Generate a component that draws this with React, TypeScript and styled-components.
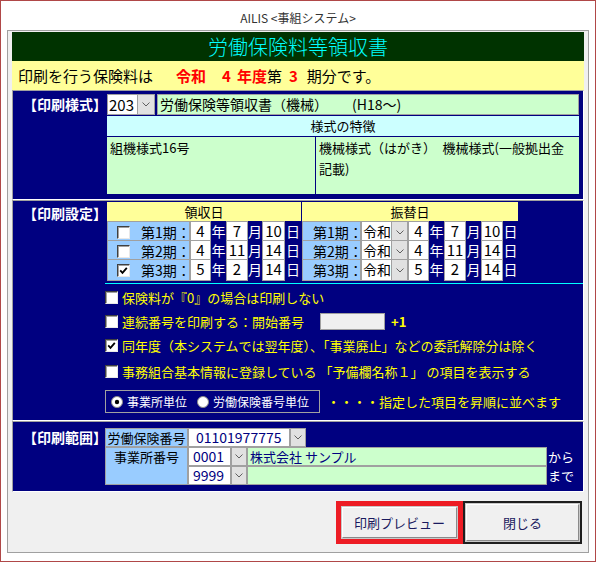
import React from "react";
import styled, { createGlobalStyle } from "styled-components";

const GlobalStyle = createGlobalStyle`
  html, body { margin: 0; padding: 0; background: #fff; }
  body { font-family: "Noto Sans CJK JP", "Noto Sans", sans-serif; }
  *, *::before, *::after { box-sizing: border-box; }
`;

const Window = styled.div`
  width: 596px;
  height: 562px;
  border: 1px solid #b04848;
  background: #fff;
  display: flex;
  flex-direction: column;
`;

const TitleBar = styled.div`
  height: 29px;
  padding-top: 3px;
  display: flex;
  align-items: center;
  justify-content: center;
  font-size: 12px;
  color: #333;
`;

const Frame = styled.div`
  flex: 1;
  margin: 0 6px 8px;
  border: 1px solid #a0a0a0;
  background: #f0f0f0;
  padding: 1px 4px 0;
  display: flex;
  flex-direction: column;
`;

const Header = styled.div`
  height: 29px;
  background: #003300;
  color: #00ffff;
  font-size: 20px;
  font-weight: 300;
  line-height: 29px;
  text-align: center;
`;

const InfoBar = styled.div`
  height: 29px;
  background: #ffff99;
  display: flex;
  align-items: center;
  padding-left: 6px;
  font-size: 15px;
  color: #000;
  white-space: nowrap;
`;

const InfoText = styled.span<{ $ml?: number; $red?: boolean }>`
  margin-left: ${(p) => p.$ml ?? 0}px;
  color: ${(p) => (p.$red ? "#ff0000" : "#000")};
  font-weight: ${(p) => (p.$red ? "bold" : "normal")};
`;

const Section = styled.div<{ $pt: number; $pb: number }>`
  background: #000080;
  border: 1px solid;
  border-color: #a0a0a0 #ffffff #ffffff #a0a0a0;
  display: grid;
  grid-template-columns: 92px 1fr;
  padding: ${(p) => p.$pt}px 4px ${(p) => p.$pb}px 0;
`;

const SectionLabel = styled.div<{ $lh: number; $pt?: number }>`
  color: #fff;
  font-weight: bold;
  font-size: 14px;
  line-height: ${(p) => p.$lh}px;
  padding: ${(p) => p.$pt ?? 0}px 0 0 10px;
  white-space: nowrap;
`;

/* ---- 印刷様式 ---- */
const StyleBody = styled.div`
  display: flex;
  flex-direction: column;
  gap: 1px;
  margin-left: 2px;
`;

const StyleRow = styled.div`
  display: flex;
  gap: 2px;
  height: 21px;
`;

const CodeSelect = styled.div`
  display: flex;
  width: 48px;
`;

const CodeValue = styled.div`
  flex: 1;
  background: #fff;
  border: 1px solid #a0a0a0;
  border-right: none;
  font-size: 15px;
  line-height: 19px;
  padding-left: 1px;
  color: #000;
`;

const DropButton = styled.div<{ $w: number }>`
  width: ${(p) => p.$w}px;
  flex: none;
  background: #e1e1e1;
  border: 1px solid #a0a0a0;
  display: flex;
  align-items: center;
  justify-content: center;
`;

const NameField = styled.div`
  flex: 1;
  background: #ccffcc;
  border: 1px solid #a0a0a0;
  font-size: 14px;
  line-height: 19px;
  padding-left: 2px;
  color: #000;
  white-space: nowrap;
`;

const NameSuffix = styled.span`
  margin-left: 24px;
`;

const FeatureHead = styled.div`
  height: 20px;
  background: #ccffff;
  font-size: 13px;
  line-height: 20px;
  text-align: center;
  color: #000;
`;

const FeatureBody = styled.div`
  height: 57px;
  display: grid;
  grid-template-columns: 208px 1fr;
  gap: 1px;
`;

const FeatureCell = styled.div`
  background: #ccffcc;
  font-size: 13px;
  line-height: 21px;
  padding: 0 3px;
  color: #000;
`;

/* ---- 印刷設定 ---- */
const SettingBody = styled.div`
  display: flex;
  flex-direction: column;
`;

const DateTables = styled.div`
  display: flex;
  gap: 1px;
  margin-left: 2px;
`;

const DateTable = styled.div<{ $w: number }>`
  width: ${(p) => p.$w}px;
  display: flex;
  flex-direction: column;
`;

const DateHead = styled.div`
  height: 19px;
  background: #ffff99;
  font-size: 13px;
  line-height: 19px;
  text-align: center;
  color: #000;
`;

const DateRow = styled.div<{ $cols: string }>`
  display: grid;
  grid-template-columns: ${(p) => p.$cols};
  height: 20px;
  & + & {
    margin-top: -1px;
  }
`;

const PeriodCell = styled.div<{ $pl: number }>`
  background: #99ccff;
  border: 1px solid #a0a0a0;
  display: flex;
  align-items: center;
  gap: 11px;
  padding-left: ${(p) => p.$pl}px;
  font-size: 14px;
  color: #000;
  white-space: nowrap;
`;

const NumCell = styled.div`
  background: #fff;
  border: 1px solid #a0a0a0;
  font-size: 15px;
  line-height: 18px;
  text-align: center;
  color: #000;
`;

const EraCell = styled.div`
  background: #fff;
  border: 1px solid #a0a0a0;
  border-right: none;
  font-size: 14px;
  line-height: 18px;
  padding-left: 1px;
  color: #000;
`;

const UnitCell = styled.div`
  color: #fff;
  font-size: 14px;
  line-height: 20px;
  text-align: center;
`;

const CyanRule = styled.div`
  height: 1px;
  background: #00ffff;
  margin: 4px -4px 1px 0;
`;

const OptionRow = styled.div<{ $mt?: number }>`
  display: flex;
  align-items: center;
  gap: 4px;
  height: 24px;
  margin-top: ${(p) => p.$mt ?? 0}px;
  color: #ffff00;
  font-size: 13px;
  white-space: nowrap;
`;

const StartInput = styled.div`
  width: 65px;
  height: 17px;
  background: #f0f0f0;
  border: 1px solid #a0a0a0;
  margin-left: 12px;
`;

const PlusOne = styled.span`
  margin-left: 2px;
  font-weight: bold;
`;

const SortRow = styled.div`
  display: flex;
  align-items: center;
  gap: 7px;
  height: 23px;
  margin-top: 7px;
`;

const RadioGroup = styled.div`
  width: 215px;
  height: 23px;
  border: 1px solid #a0a0a0;
  display: flex;
  align-items: center;
  padding-left: 5px;
`;

const RadioItem = styled.span`
  display: flex;
  align-items: center;
  gap: 4px;
  color: #fff;
  font-size: 12px;
  margin-right: 10px;
  white-space: nowrap;
`;

const SortNote = styled.span`
  color: #ffff00;
  font-size: 13px;
  white-space: nowrap;
`;

/* ---- 印刷範囲 ---- */
const RangeGrid = styled.div`
  display: grid;
  grid-template-columns: 83px 43px 16px 43px 16px 241px 30px;
  grid-template-rows: repeat(3, 19px);
`;

const RangeLabel = styled.div<{ $row: string }>`
  grid-column: 1;
  grid-row: ${(p) => p.$row};
  background: #99ccff;
  border: 1px solid #a0a0a0;
  font-size: 13px;
  line-height: 17px;
  text-align: center;
  color: #000;
  white-space: nowrap;
`;

const RangeValue = styled.div<{ $col: string; $pl: number }>`
  grid-column: ${(p) => p.$col};
  background: #fff;
  border: 1px solid #a0a0a0;
  font-size: 14px;
  line-height: 17px;
  padding-left: ${(p) => p.$pl}px;
  color: #000080;
`;

const RangeDrop = styled(DropButton)<{ $col: number }>`
  grid-column: ${(p) => p.$col};
`;

const RangeName = styled.div`
  grid-column: 4 / 7;
  background: #ccffcc;
  border: 1px solid #a0a0a0;
  font-size: 13px;
  line-height: 17px;
  padding-left: 2px;
  color: #000080;
`;

const RangeSuffix = styled.div`
  grid-column: 7;
  color: #fff;
  font-size: 13px;
  line-height: 19px;
  padding-left: 1px;
`;

/* ---- buttons ---- */
const ButtonBar = styled.div`
  flex: 1;
  display: flex;
  justify-content: flex-end;
  align-items: flex-start;
  padding: 9px 2px 0 0;
`;

const PreviewFrame = styled.div`
  width: 127px;
  height: 43px;
  border: 5px solid #ed1c24;
  padding: 1px;
  background: #f0f0f0;
`;

const CloseFrame = styled.div`
  width: 119px;
  height: 43px;
  border: 2px solid #1e1e1e;
  padding: 1px;
  background: #f0f0f0;
`;

const Button = styled.div`
  width: 100%;
  height: 100%;
  border: 1px solid;
  border-color: #ffffff #8a8a8a #8a8a8a #ffffff;
  box-shadow: 0 0 0 1px #c8c8c8;
  background: #f0f0f0;
  display: flex;
  align-items: center;
  justify-content: center;
  font-size: 13px;
  color: #1a1a5e;
`;

const CheckBoxBox = styled.span`
  width: 13px;
  height: 13px;
  flex: none;
  background: #fff;
  border: 1px solid;
  border-color: #404040 #e8e8e8 #e8e8e8 #404040;
  box-shadow: inset 1px 1px 0 #a0a0a0;
  display: inline-flex;
  align-items: center;
  justify-content: center;
`;

const Check = ({ on }: { on?: boolean }) => (
  <CheckBoxBox>
    {on && (
      <svg width="9" height="9" viewBox="0 0 9 9">
        <path d="M1.2 4.3 L3.5 6.8 L7.8 1.8" fill="none" stroke="#000" strokeWidth="1.8" />
      </svg>
    )}
  </CheckBoxBox>
);

const Radio = ({ on }: { on?: boolean }) => (
  <svg width="12" height="12" viewBox="0 0 12 12">
    <circle cx="6" cy="6" r="5.5" fill="#fff" stroke="#8a8a8a" />
    {on && <circle cx="6" cy="6" r="2.2" fill="#000" />}
  </svg>
);

const Chevron = () => (
  <svg width="8" height="5" viewBox="0 0 8 5">
    <path d="M0.5 0.5 L4 4 L7.5 0.5" fill="none" stroke="#606060" strokeWidth="1" />
  </svg>
);

const periods = [
  { no: 1, on: false, y: "4", m: "7", d: "10" },
  { no: 2, on: false, y: "4", m: "11", d: "14" },
  { no: 3, on: true, y: "5", m: "2", d: "14" },
];

const LEFT_COLS = "83px 21px 15px 22px 14px 23px 16px";
const RIGHT_COLS = "59px 30px 17px 21px 15px 22px 15px 22px 15px";

export default function App() {
  return (
    <>
      <GlobalStyle />
      <Window>
        <TitleBar>AILIS &lt;事組システム&gt;</TitleBar>
        <Frame>
          <Header>労働保険料等領収書</Header>
          <InfoBar>
            <InfoText>印刷を行う保険料は</InfoText>
            <InfoText $red $ml={23}>令和</InfoText>
            <InfoText $red $ml={16}>4</InfoText>
            <InfoText $red $ml={6}>年度</InfoText>
            <InfoText>第</InfoText>
            <InfoText $red $ml={7}>3</InfoText>
            <InfoText $ml={9}>期分です。</InfoText>
          </InfoBar>

          <Section $pt={3} $pb={5}>
            <SectionLabel $lh={21}>【印刷様式】</SectionLabel>
            <StyleBody>
              <StyleRow>
                <CodeSelect>
                  <CodeValue>203</CodeValue>
                  <DropButton $w={18}>
                    <Chevron />
                  </DropButton>
                </CodeSelect>
                <NameField>
                  労働保険等領収書（機械）<NameSuffix>(H18～)</NameSuffix>
                </NameField>
              </StyleRow>
              <FeatureHead>様式の特徴</FeatureHead>
              <FeatureBody>
                <FeatureCell>組機様式16号</FeatureCell>
                <FeatureCell>機械様式（はがき）　機械様式(一般拠出金記載)</FeatureCell>
              </FeatureBody>
            </StyleBody>
          </Section>

          <Section $pt={1} $pb={7}>
            <SectionLabel $lh={19} $pt={2}>【印刷設定】</SectionLabel>
            <SettingBody>
              <DateTables>
                <DateTable $w={194}>
                  <DateHead>領収日</DateHead>
                  {periods.map((p) => (
                    <DateRow key={p.no} $cols={LEFT_COLS}>
                      <PeriodCell $pl={9}>
                        <Check on={p.on} />
                        第{p.no}期：
                      </PeriodCell>
                      <NumCell>{p.y}</NumCell>
                      <UnitCell>年</UnitCell>
                      <NumCell>{p.m}</NumCell>
                      <UnitCell>月</UnitCell>
                      <NumCell>{p.d}</NumCell>
                      <UnitCell>日</UnitCell>
                    </DateRow>
                  ))}
                </DateTable>
                <DateTable $w={216}>
                  <DateHead>振替日</DateHead>
                  {periods.map((p) => (
                    <DateRow key={p.no} $cols={RIGHT_COLS}>
                      <PeriodCell $pl={10}>第{p.no}期：</PeriodCell>
                      <EraCell>令和</EraCell>
                      <DropButton $w={17}>
                        <Chevron />
                      </DropButton>
                      <NumCell>{p.y}</NumCell>
                      <UnitCell>年</UnitCell>
                      <NumCell>{p.m}</NumCell>
                      <UnitCell>月</UnitCell>
                      <NumCell>{p.d}</NumCell>
                      <UnitCell>日</UnitCell>
                    </DateRow>
                  ))}
                </DateTable>
              </DateTables>

              <CyanRule />

              <OptionRow>
                <Check />
                保険料が『0』の場合は印刷しない
              </OptionRow>
              <OptionRow>
                <Check />
                連続番号を印刷する：開始番号
                <StartInput />
                <PlusOne>+1</PlusOne>
              </OptionRow>
              <OptionRow>
                <Check on />
                同年度（本システムでは翌年度）、「事業廃止」などの委託解除分は除く
              </OptionRow>
              <OptionRow $mt={2}>
                <Check />
                事務組合基本情報に登録している 「予備欄名称１」 の項目を表示する
              </OptionRow>

              <SortRow>
                <RadioGroup>
                  <RadioItem>
                    <Radio on />
                    事業所単位
                  </RadioItem>
                  <RadioItem>
                    <Radio />
                    労働保険番号単位
                  </RadioItem>
                </RadioGroup>
                <SortNote>・・・・指定した項目を昇順に並べます</SortNote>
              </SortRow>
            </SettingBody>
          </Section>

          <Section $pt={6} $pb={6}>
            <SectionLabel $lh={19}>【印刷範囲】</SectionLabel>
            <RangeGrid>
              <RangeLabel $row="1">労働保険番号</RangeLabel>
              <RangeValue $col="2 / 5" $pl={7}>01101977775</RangeValue>
              <RangeDrop $w={16} $col={5}>
                <Chevron />
              </RangeDrop>

              <RangeLabel $row="2 / 4">事業所番号</RangeLabel>
              <RangeValue $col="2" $pl={4}>0001</RangeValue>
              <RangeDrop $w={16} $col={3}>
                <Chevron />
              </RangeDrop>
              <RangeName>株式会社 サンプル</RangeName>
              <RangeSuffix>から</RangeSuffix>

              <RangeValue $col="2" $pl={4}>9999</RangeValue>
              <RangeDrop $w={16} $col={3}>
                <Chevron />
              </RangeDrop>
              <RangeName />
              <RangeSuffix>まで</RangeSuffix>
            </RangeGrid>
          </Section>

          <ButtonBar>
            <PreviewFrame>
              <Button>印刷プレビュー</Button>
            </PreviewFrame>
            <CloseFrame>
              <Button>閉じる</Button>
            </CloseFrame>
          </ButtonBar>
        </Frame>
      </Window>
    </>
  );
}
